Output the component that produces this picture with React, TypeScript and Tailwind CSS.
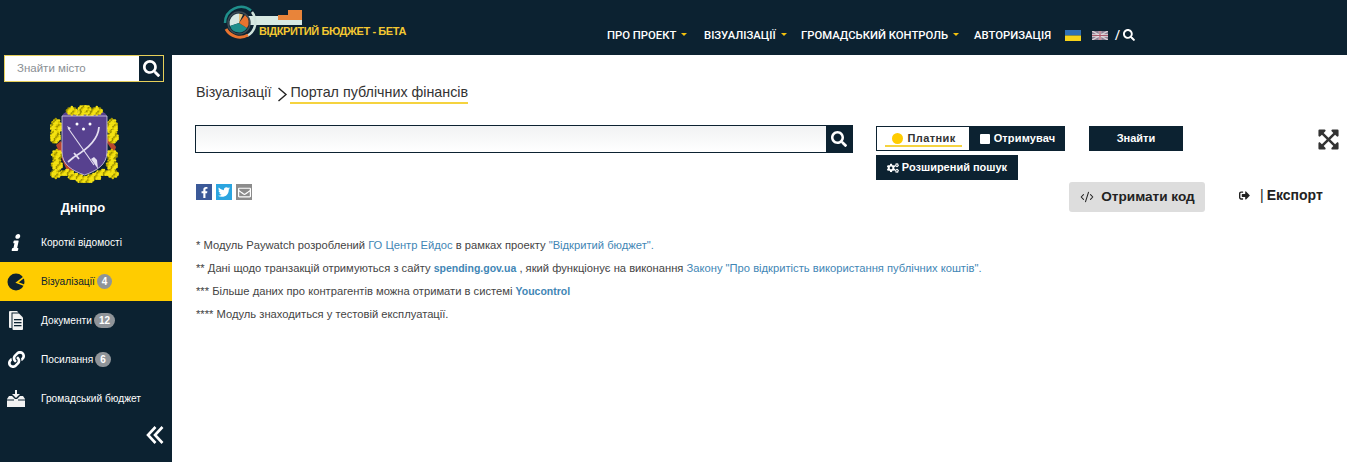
import React from "react";
import {
  FaSearch,
  FaInfo,
  FaLink,
  FaCogs,
  FaExpandArrowsAlt,
  FaFacebookF,
  FaTwitter,
  FaRegEnvelope,
  FaSignOutAlt,
} from "react-icons/fa";
import { CodeXml } from "lucide-react";

const Logo = () => (
  <svg width="80" height="38" viewBox="0 0 80 38" className="block">
    <rect x="22" y="13" width="58" height="9" fill="#d7e9e3" />
    <rect x="56" y="12" width="24" height="5" fill="#e8843a" />
    <rect x="66" y="7" width="14" height="5" fill="#e8843a" />
    <path d="M3 20a16 16 0 0 1 26-12.5" fill="none" stroke="#1f8f8b" strokeWidth="2.5" />
    <path d="M30 9a16 16 0 0 1-5 24" fill="none" stroke="#cfe3dc" strokeWidth="2.5" />
    <path d="M26 32a16 16 0 0 1-22-6" fill="none" stroke="#e8742f" strokeWidth="3" />
    <circle cx="17" cy="20" r="11" fill="#0c2231" stroke="#3a4a52" strokeWidth="1.5" />
    <path d="M17 20V10.5A9.5 9.5 0 0 0 8 23z" fill="#d7e9e3" />
    <path d="M17 20L8 23a9.5 9.5 0 0 0 17 2z" fill="#1f8f8b" />
    <path d="M17 20l6-8a9.5 9.5 0 0 1 2 13z" fill="#e8742f" />
    <path d="M17 20v-9.5l4 1z" fill="#e8c27a" />
  </svg>
);

// Wreath clusters: [x, y, half-width, half-height]
const clusters: [number, number, number, number][] = [
  [6, 22, 5, 8], [5, 32, 5, 6],
  [7, 50, 5, 5], [7, 60, 5, 6], [6, 69, 5, 4],
  [62, 22, 5, 8], [63, 32, 5, 6],
  [62, 50, 5, 5], [62, 60, 5, 6], [63, 69, 5, 4],
  [17, 68, 7, 3], [26, 72, 7, 3], [35, 75, 8, 3], [44, 72, 7, 3], [53, 68, 7, 3],
  [22, 6, 5, 4], [47, 6, 5, 4], [35, 4, 6, 4], [30, 9, 4, 2], [40, 9, 4, 2],
];

const Coat = () => {
  const dots: React.ReactNode[] = [];
  clusters.forEach(([cx, cy, w, h], c) => {
    for (let yy = -h; yy <= h; yy += 1.6) {
      for (let xx = -w; xx <= w; xx += 1.6) {
        if ((xx * xx) / (w * w) + (yy * yy) / (h * h) > 1.05) continue;
        const k = Math.abs(Math.round(xx * 7 + yy * 13 + c * 5)) % 5;
        dots.push(
          <circle key={`${c}-${xx}-${yy}`} cx={cx + xx} cy={cy + yy} r="1.25" fill={k === 0 ? "#9c9000" : k === 1 ? "#d9c400" : "#f5e312"} />,
        );
      }
    }
  });
  return (
    <svg width="70" height="80" viewBox="0 0 70 80" className="block">
      <path d="M6 40 L18 68 L24 64 L11 36z" fill="#b9472e" />
      <path d="M66 42 L56 28 L56 36 L64 48z" fill="#b9472e" />
      <path d="M12 11q2-5 10-5h25q8 0 10 5v6H12z" fill="#57418f" />
      {dots}
      <path d="M12 11H57V47C57 60 46 66 34.500 70C23 66 12 60 12 47Z" fill="#57418f" stroke="#d8d2e6" strokeWidth="0.8" />
      <circle cx="27" cy="19" r="1.5" fill="#fff" />
      <circle cx="40" cy="19" r="1.5" fill="#fff" />
      <circle cx="33.500" cy="24" r="1.5" fill="#fff" />
      <path d="M18 23L44 60" stroke="#e4dff0" strokeWidth="1.1" />
      <path d="M17 21l4 2-2 2z" fill="#e4dff0" />
      <path d="M41 54l7 10-1-9-3-3z" fill="#e4dff0" />
      <path d="M49 22Q48 38 24 52" fill="none" stroke="#e4dff0" strokeWidth="1.8" />
      <path d="M24 48l5 6M24 52l-6 5" stroke="#e4dff0" strokeWidth="1.8" />
    </svg>
  );
};

const PieIcon = () => (
  <svg width="18" height="18" viewBox="0 0 18 18">
    <circle cx="9" cy="9" r="8.500" fill="#0c2231" />
    <path d="M18 3.500L10 9.500 18 12.500" fill="none" stroke="#ffcc00" strokeWidth="1.600" />
  </svg>
);

const DocsIcon = () => (
  <svg width="16" height="20" viewBox="0 0 16 20">
    <path d="M2 0h7l1.500 1.500H3.500V17H2a1 1 0 0 1-1-1V1a1 1 0 0 1 1-1z" fill="#f2f2f2" />
    <path d="M4.500 2.500h6.500l4 4V18a1 1 0 0 1-1 1H5.500a1 1 0 0 1-1-1z" fill="#f2f2f2" />
    <rect x="6" y="8" width="7.500" height="1.300" fill="#0c2231" />
    <rect x="6" y="11" width="7.500" height="1.300" fill="#0c2231" />
    <rect x="6" y="14" width="7.500" height="1.300" fill="#0c2231" />
  </svg>
);

const BudgetIcon = () => (
  <svg width="18" height="18" viewBox="0 0 18 18">
    <path d="M8 0h2v4h3l-4 4-4-4h3z" fill="#f2f2f2" />
    <path d="M0 9l2-3h3l3 3h2l3-3h3l2 3v8H0z" fill="#f2f2f2" />
    <rect x="0" y="9.500" width="7" height="1" fill="#0c2231" />
    <rect x="11" y="9.500" width="7" height="1" fill="#0c2231" />
  </svg>
);

const Caret = () => (
  <span className="ml-[5px] inline-block h-0 w-0 translate-y-[-1px] border-x-[3.500px] border-t-[3.500px] border-x-transparent border-t-[#f4c20d] align-middle" />
);

const NavItem = ({ children, caret, className }: { children: React.ReactNode; caret?: boolean; className?: string }) => (
  <span className={"whitespace-nowrap " + (className ?? "")}>
    {children}
    {caret && <Caret />}
  </span>
);

const Badge = ({ n }: { n: string }) => (
  <span className="ml-[2px] rounded-full bg-[#8f9499] px-[5px] text-[10px] leading-[15px] font-bold text-white">{n}</span>
);

const MenuRow = ({
  icon,
  label,
  badge,
  active,
}: {
  icon: React.ReactNode;
  label: string;
  badge?: string;
  active?: boolean;
}) => (
  <div className={"flex h-[39px] items-center " + (active ? "bg-[#ffcc00] text-[#0c2231]" : "text-white")}>
    <div className="flex w-[41px] shrink-0 justify-center pr-[9px]">{icon}</div>
    <span className="text-[10.200px] whitespace-nowrap">{label}</span>
    {badge && <Badge n={badge} />}
  </div>
);

const Link = ({ children }: { children: React.ReactNode }) => <span className="text-[#3f86b5]">{children}</span>;

export default function App() {
  return (
    <div className="flex h-[462px] w-[1347px] flex-col overflow-hidden bg-white font-['Liberation_Sans',Arial,sans-serif] text-[#333]">
      <header className="flex h-[55px] shrink-0 bg-[#0c2231]">
        <div className="relative ml-[222px] w-[400px] shrink-0 pt-[3px]">
          <Logo />
          <span className="absolute top-[23px] left-[37px] text-[11px] font-bold tracking-[-0.400px] whitespace-nowrap text-[#f4c832]">
            ВІДКРИТИЙ БЮДЖЕТ - БЕТА
          </span>
        </div>
        <nav className="mt-[22px] -ml-[15px] flex h-[28px] items-center font-['Roboto',sans-serif] text-[11.300px] font-medium text-white">
          <NavItem caret className="w-[97px]">ПРО ПРОЕКТ</NavItem>
          <NavItem caret className="w-[97px]">ВІЗУАЛІЗАЦІЇ</NavItem>
          <NavItem caret className="w-[173px]">ГРОМАДСЬКИЙ КОНТРОЛЬ</NavItem>
          <NavItem className="w-[91px]">АВТОРИЗАЦІЯ</NavItem>
          <svg width="16" height="11" viewBox="0 0 16 11" className="mr-[11px] block -translate-y-[1px]">
            <rect width="16" height="5.500" fill="#2f6fb5" />
            <rect y="5.500" width="16" height="5.500" fill="#f7d31a" />
          </svg>
          <svg width="16" height="9" viewBox="0 0 16 9" className="block -translate-y-[1px]">
            <rect width="16" height="9" fill="#8a7d92" />
            <path d="M0 0L16 9M16 0L0 9" stroke="#d9d0d6" strokeWidth="1.500" />
            <path d="M8 0V9M0 4.500H16" stroke="#e7dfe4" strokeWidth="2.500" />
            <path d="M8 0V9M0 4.500H16" stroke="#a95a6c" strokeWidth="1.200" />
          </svg>
          <span className="ml-[7px] -translate-y-[1px] text-[13px]">/</span>
          <FaSearch className="ml-[3px] -translate-y-[1px] text-[12px] text-white" />
        </nav>
      </header>
      <div className="flex min-h-0 flex-1">
        <aside className="relative w-[172px] shrink-0 bg-[#0c2231]">
          <div className="ml-[4px] flex h-[27px] w-[160px] border border-[#e6cf5a] bg-white">
            <span className="flex-1 pl-[12px] text-[11.500px] leading-[25px] text-[#8a8f94]">Знайти місто</span>
            <span className="flex w-[24px] items-center justify-center bg-[#0c2231]">
              <FaSearch className="text-[17px] text-white" />
            </span>
          </div>
          <div className="mt-[23px] flex justify-center pr-[3px]">
            <Coat />
          </div>
          <div className="mt-[15px] pr-[6px] text-center text-[13px] leading-[16px] font-bold text-white">Дніпро</div>
          <div className="mt-[7px]">
            <MenuRow icon={<FaInfo className="-skew-x-12 text-[17px] text-white" />} label="Короткі відомості" />
            <MenuRow icon={<PieIcon />} label="Візуалізації" badge="4" active />
            <MenuRow icon={<DocsIcon />} label="Документи" badge="12" />
            <MenuRow icon={<FaLink className="text-[17px] text-white" />} label="Посилання" badge="6" />
            <MenuRow icon={<BudgetIcon />} label="Громадський бюджет" />
          </div>
          <svg width="18" height="18" viewBox="0 0 18 18" className="absolute right-[8px] bottom-[18px]">
            <path d="M9.500 1L2 9l7.500 8M16.500 1L9 9l7.500 8" fill="none" stroke="#fff" strokeWidth="2.600" />
          </svg>
        </aside>
        <main className="min-w-0 flex-1 pl-[23px]">
          <div className="flex items-start pt-[27px] pl-[1px] text-[14.300px] leading-[20px] text-[#333]">
            <span>Візуалізації</span>
            <svg width="11" height="15" viewBox="0 0 11 15" className="mt-[5px] mr-[2px] ml-[6px]">
              <path d="M1.500 1L9 7.500 1.500 14" fill="none" stroke="#222" strokeWidth="1.400" />
            </svg>
            <span className="border-b-2 border-[#f5d33f] pt-[1px] pb-[1px] leading-[18px]">Портал публічних фінансів</span>
          </div>
          <div className="mt-[21px] flex items-start">
            <div className="flex h-[28px] w-[658px] shrink-0 border border-[#0c2231] bg-gradient-to-b from-[#f1f2f3] to-white">
              <div className="flex-1" />
              <div className="flex w-[26px] items-center justify-center bg-[#0c2231]">
                <FaSearch className="text-[16px] text-white" />
              </div>
            </div>
            <div className="ml-[23px] w-[307px] shrink-0 pt-[1px]">
              <div className="flex">
                <div className="flex h-[25px] w-[189px] text-[11px] font-bold">
                  <div className="relative flex w-[94px] items-center justify-center gap-[4px] border border-[#0c2231] bg-white pb-[1px] pl-[2px] tracking-[0.400px] text-[#333]">
                    <span className="h-[11px] w-[11px] rounded-full bg-[#ffcc00]" />
                    Платник
                    <span className="absolute right-[7px] bottom-[3px] left-[8px] h-[2px] bg-[#f5d33f]" />
                  </div>
                  <div className="flex flex-1 items-center justify-center gap-[4px] bg-[#0c2231] tracking-[0.150px] text-white">
                    <span className="h-[10px] w-[10px] rounded-[1px] bg-white" />
                    Отримувач
                  </div>
                </div>
                <div className="ml-[24px] flex h-[25px] w-[94px] items-center justify-center bg-[#0c2231] text-[11px] font-bold text-white">
                  Знайти
                </div>
              </div>
              <div className="mt-[4px] flex h-[25px] w-[142px] items-center justify-center gap-[3px] bg-[#0c2231] text-[11px] font-bold text-white">
                <FaCogs className="text-[12px]" />
                Розширений пошук
              </div>
            </div>
            <FaExpandArrowsAlt className="mt-[3px] ml-[134px] h-[23px] w-[23px] text-[#333]" />
          </div>
          <div className="mt-[2px] flex items-start">
            <div className="flex gap-[4px] pt-[2px] pl-[1px]">
              <span className="flex h-[16px] w-[16px] items-center justify-center bg-[#3b5998]">
                <FaFacebookF className="text-[11px] text-white" />
              </span>
              <span className="flex h-[16px] w-[16px] items-center justify-center bg-[#2ba5e0]">
                <FaTwitter className="text-[12px] text-white" />
              </span>
              <span className="flex h-[16px] w-[16px] items-center justify-center bg-[#8c8c8c]">
                <FaRegEnvelope className="text-[13px] text-white" />
              </span>
            </div>
            <div className="ml-[817px] flex h-[30px] w-[136px] shrink-0 items-center justify-center gap-[7px] rounded-[3px] bg-[#dddddd] pl-[1px] text-[13.600px] font-bold text-[#222]">
              <CodeXml size={14} strokeWidth={1.8} />
              Отримати код
            </div>
            <div className="ml-[34px] flex h-[26px] items-center text-[14px] font-bold whitespace-nowrap text-[#222]">
              <FaSignOutAlt className="mr-[10px] text-[11px]" />
              <span className="font-normal">|</span>
              <span className="ml-[3px]">Експорт</span>
            </div>
          </div>
          <div className="mt-[22px] pl-[1px] text-[11.200px] leading-[23px] text-[#444]">
            <p>
              * Модуль Paywatch розроблений <Link>ГО Центр Ейдос</Link> в рамках проекту <Link>"Відкритий бюджет".</Link>
            </p>
            <p>
              ** Дані щодо транзакцій отримуються з сайту <span className="text-[10.500px] font-bold text-[#3f86b5]">spending.gov.ua</span> , який функціонує на виконання{" "}
              <Link>Закону "Про відкритість використання публічних коштів".</Link>
            </p>
            <p>
              *** Більше даних про контрагентів можна отримати в системі <span className="text-[10.500px] font-bold text-[#3f86b5]">Youcontrol</span>
            </p>
            <p>**** Модуль знаходиться у тестовій експлуатації.</p>
          </div>
        </main>
      </div>
    </div>
  );
}
